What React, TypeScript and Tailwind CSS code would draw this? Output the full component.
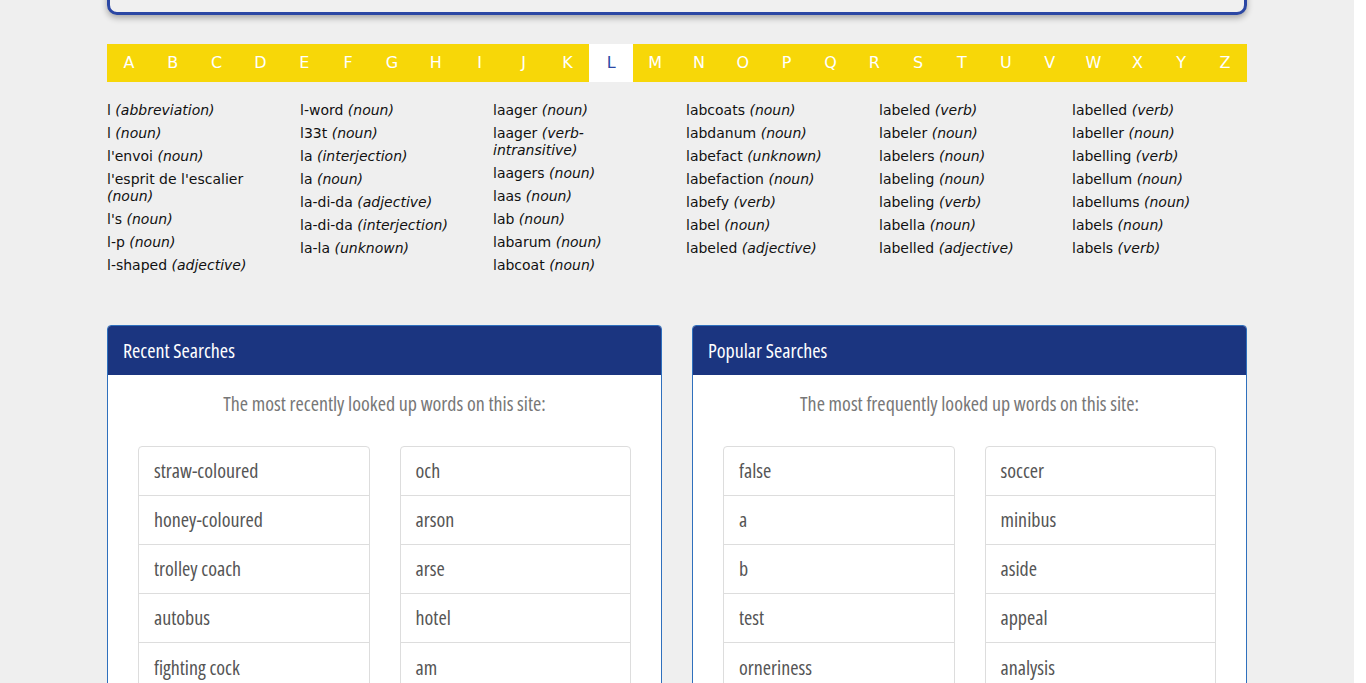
import type { ReactNode } from 'react';

const letters = 'ABCDEFGHIJKLMNOPQRSTUVWXYZ'.split('');
const activeLetter = 'L';

type Entry = [string, string];

const wordColumns: Entry[][] = [
  [
    ['l', 'abbreviation'],
    ['l', 'noun'],
    ["l'envoi", 'noun'],
    ["l'esprit de l'escalier", 'noun'],
    ["l's", 'noun'],
    ['l-p', 'noun'],
    ['l-shaped', 'adjective'],
  ],
  [
    ['l-word', 'noun'],
    ['l33t', 'noun'],
    ['la', 'interjection'],
    ['la', 'noun'],
    ['la-di-da', 'adjective'],
    ['la-di-da', 'interjection'],
    ['la-la', 'unknown'],
  ],
  [
    ['laager', 'noun'],
    ['laager', 'verb-intransitive'],
    ['laagers', 'noun'],
    ['laas', 'noun'],
    ['lab', 'noun'],
    ['labarum', 'noun'],
    ['labcoat', 'noun'],
  ],
  [
    ['labcoats', 'noun'],
    ['labdanum', 'noun'],
    ['labefact', 'unknown'],
    ['labefaction', 'noun'],
    ['labefy', 'verb'],
    ['label', 'noun'],
    ['labeled', 'adjective'],
  ],
  [
    ['labeled', 'verb'],
    ['labeler', 'noun'],
    ['labelers', 'noun'],
    ['labeling', 'noun'],
    ['labeling', 'verb'],
    ['labella', 'noun'],
    ['labelled', 'adjective'],
  ],
  [
    ['labelled', 'verb'],
    ['labeller', 'noun'],
    ['labelling', 'verb'],
    ['labellum', 'noun'],
    ['labellums', 'noun'],
    ['labels', 'noun'],
    ['labels', 'verb'],
  ],
];

const recent = [
  ['straw-coloured', 'honey-coloured', 'trolley coach', 'autobus', 'fighting cock'],
  ['och', 'arson', 'arse', 'hotel', 'am'],
];

const popular = [
  ['false', 'a', 'b', 'test', 'orneriness'],
  ['soccer', 'minibus', 'aside', 'appeal', 'analysis'],
];

// no Oswald offline: squeeze Open Sans along its width axis
const narrow = "font-['Open_Sans',sans-serif] [font-stretch:75%]";

function WordList({ words }: { words: string[] }) {
  return (
    <ul className="border border-[#dddddd] rounded-[4px] bg-white">
      {words.map((w, i) => (
        <li
          key={w}
          className={`h-[49px] px-[15px] flex items-center text-[20px] font-medium text-[#555555] ${
            i < words.length - 1 ? 'border-b border-[#dddddd]' : ''
          }`}
        >
          {w}
        </li>
      ))}
    </ul>
  );
}

function Panel({ title, subtitle, children }: { title: string; subtitle: string; children: ReactNode }) {
  return (
    <div className={`border border-[#2f70bd] rounded-[4px] bg-white ${narrow}`}>
      <div className="h-[49px] bg-[#1b3580] px-[15px] flex items-center rounded-t-[3px]">
        <h3 className="text-[20px] font-medium text-white">{title}</h3>
      </div>
      <div className="px-[30px] pt-[15px] pb-[20px]">
        <p className="text-center text-[20px] leading-[28px] font-medium text-[#777777]">{subtitle}</p>
        <div className="mt-[28px] grid grid-cols-2 gap-[30px]">{children}</div>
      </div>
    </div>
  );
}

export default function App() {
  return (
    <div className="h-[683px] overflow-hidden flex font-['DejaVu_Sans',sans-serif]">
      <main className="flex-1 bg-[#efefef]">
        <div className="w-[1140px] mx-auto">
          {/* search box, scrolled mostly out of view */}
          <div className="h-[60px] -mt-[45px] border-[3px] border-[#2b47a4] rounded-[10px] bg-[#f0f0f0] shadow-[0_3px_6px_rgba(0,0,0,0.3)]" />

          {/* alphabet */}
          <nav className="mt-[29px] h-[38px] bg-[#f7d708] grid grid-cols-[repeat(26,1fr)]">
            {letters.map((l) => (
              <a
                key={l}
                className={`flex items-center justify-center text-[16px] ${
                  l === activeLetter ? 'bg-white text-[#2b47a4]' : 'text-white'
                }`}
              >
                {l}
              </a>
            ))}
          </nav>

          {/* words under the current letter */}
          <div className="mt-[20px] flex">
            {wordColumns.map((col, ci) => (
              <ul key={ci} className="w-[193px] shrink-0 pr-[30px]">
                {col.map(([word, kind], i) => (
                  <li key={i} className="text-[14px] leading-[17px] mb-[6px] text-[#111111]">
                    {word} <em>({kind})</em>
                  </li>
                ))}
              </ul>
            ))}
          </div>

          {/* searches */}
          <div className="mt-[45px] grid grid-cols-2 gap-[30px]">
            <Panel title="Recent Searches" subtitle="The most recently looked up words on this site:">
              <WordList words={recent[0]} />
              <WordList words={recent[1]} />
            </Panel>
            <Panel title="Popular Searches" subtitle="The most frequently looked up words on this site:">
              <WordList words={popular[0]} />
              <WordList words={popular[1]} />
            </Panel>
          </div>
        </div>
      </main>
      <div className="w-[12px] bg-white" />
    </div>
  );
}
